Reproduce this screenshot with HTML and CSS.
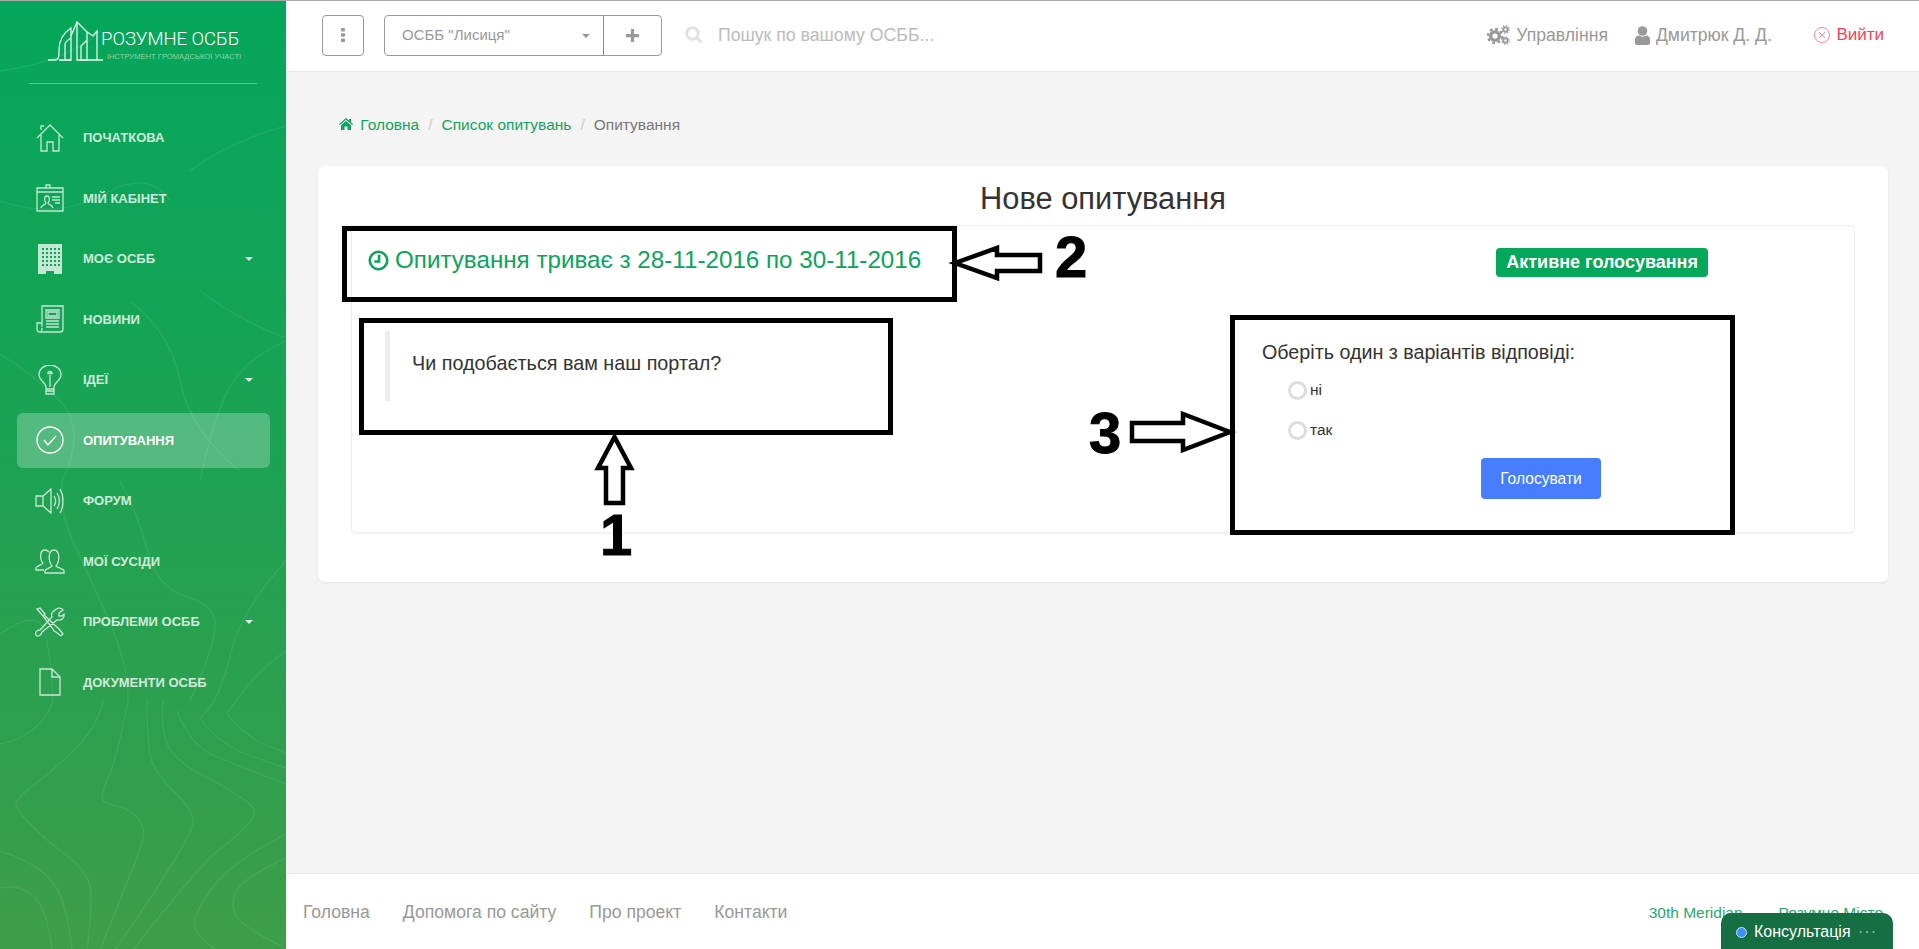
FILE: index.html
```html
<!DOCTYPE html>
<html>
<head>
  <title>Розумне ОСББ</title>
  <link rel="stylesheet" href="styles.css">
</head>
<body>

  <aside class="sidebar">
    <svg class="contours" viewBox="0 0 286 948" preserveAspectRatio="none">
      <path d="M53 700Q40 735 0 743"/>
      <path d="M103 700Q97 727 75 748Q53 770 35 783Q17 797 16 802Q15 807 29 822Q43 837 65 853Q87 870 90 885Q93 900 87 949"/>
      <path d="M128 700Q117 757 108 777Q100 797 103 800Q107 803 120 806Q133 810 140 820Q147 830 140 848Q133 867 100 949"/>
      <path d="M147 700Q147 750 153 763Q160 777 178 795Q197 813 192 826Q187 840 167 871Q147 903 115 949"/>
      <path d="M163 700Q160 733 170 748Q180 763 206 776Q233 790 246 800Q260 810 250 821Q240 833 220 848Q200 863 133 949"/>
      <path d="M177 710Q190 743 211 753Q233 763 286 783"/>
      <path d="M200 717Q217 743 251 755L286 767"/>
      <path d="M227 713Q247 737 266 744L286 752"/>
      <path d="M286 833Q233 860 213 886Q193 913 195 925Q197 937 217 949"/>
      <path d="M286 857Q243 877 236 890Q230 903 236 915Q243 927 286 947"/>
      <path d="M0 850Q33 860 50 878Q67 897 72 949"/>
      <path d="M0 887Q20 883 33 895Q47 907 52 949"/>
      <path d="M62 480Q60 513 73 541Q87 570 107 615Q128 660 128 700"/>
      <path d="M120 480Q137 510 147 548Q157 587 185 595Q213 603 215 620Q217 640 190 700"/>
      <path d="M286 560Q240 610 230 655Q220 700 200 717"/>
      <path d="M0 633Q33 610 42 625Q50 640 53 700"/>
      <path d="M286 650Q255 670 227 713"/>
      <path d="M0 353Q33 373 60 400Q87 430 62 480"/>
      <path d="M200 290Q240 320 286 337"/>
      <path d="M130 300Q170 330 180 380Q190 430 240 470"/>
      <path d="M286 340Q240 360 225 395Q210 430 200 480"/>
      <path d="M0 200Q60 220 110 190Q150 170 170 200"/>
      <path d="M190 170Q230 140 286 125"/>
      <path d="M100 30Q70 60 0 70"/>
    </svg>

    <div class="logo">
      <svg class="logo-mark" viewBox="0 0 56 42">
        <path d="M1 40H8C12 40 12 36 12 30C12 18 18 12 24 8V40H18V24C18 22 21 20 24 18"/>
        <path d="M24 16L30 2L40 12V40H34V26L40 20"/>
        <path d="M30 2V40H40"/>
        <path d="M40 12L46 16L50 11V40H56"/>
        <path d="M12 40H24M40 40H50"/>
      </svg>
      <div class="logo-text">
        <div class="logo-name">РОЗУМНЕ ОСББ</div>
        <div class="logo-sub">ІНСТРУМЕНТ ГРОМАДСЬКОЇ УЧАСТІ</div>
      </div>
    </div>

    <ul class="nav">
      <li class="nav-item">
        <svg class="nav-icon" viewBox="0 0 30 30"><path d="M2 15L15 2L28 15M6 7V3H9M6 12V28H12V19H18V28H24V12"/></svg>
        <span>Початкова</span>
      </li>
      <li class="nav-item">
        <svg class="nav-icon" viewBox="0 0 30 30"><path d="M2 5H28V28H2ZM2 9H28M11 5V2H15V5M6 25C6 22 11 22 11 20C9 18 9 13 12 13S15 18 13 20C13 22 18 22 18 25M17 14H25M17 17H25M20 20H25"/></svg>
        <span>Мій кабінет</span>
      </li>
      <li class="nav-item">
        <svg class="nav-icon" viewBox="0 0 30 30"><path class="fill" d="M3 0H27V31H19V27H11V31H3ZM7 4V6H9V4ZM11 4V6H13V4ZM15 4V6H17V4ZM19 4V6H21V4ZM23 4V6H25V4ZM7 8V10H9V8ZM11 8V10H13V8ZM15 8V10H17V8ZM19 8V10H21V8ZM23 8V10H25V8ZM7 12V14H9V12ZM11 12V14H13V12ZM15 12V14H17V12ZM19 12V14H21V12ZM23 12V14H25V12ZM7 16V18H9V16ZM11 16V18H13V16ZM15 16V18H17V16ZM19 16V18H21V16ZM23 16V18H25V16ZM7 20V22H9V20ZM11 20V22H13V20ZM15 20V22H17V20ZM19 20V22H21V20ZM23 20V22H25V20Z" fill-rule="evenodd"/></svg>
        <span>Моє ОСББ</span>
        <i class="caret"></i>
      </li>
      <li class="nav-item">
        <svg class="nav-icon" viewBox="0 0 30 30"><path d="M7 23V2H28V25C28 27 27 28 25 28H5C3 28 2 27 2 25V19H7M5 28C7 28 7 26 7 24M11 6H24V14H11ZM13 8H22V12H13ZM11 17H24M11 20H24M11 23H24"/></svg>
        <span>Новини</span>
      </li>
      <li class="nav-item">
        <svg class="nav-icon" viewBox="0 0 30 30"><path d="M11 22C11 18 4 15 4 10C4 4 9 0 15 0S26 4 26 10C26 15 19 18 19 22V29H11ZM11 24H19M11 26H19M15 22V10M13 8.500A2 2 0 1 1 17 8.500Z"/></svg>
        <span>Ідеї</span>
        <i class="caret"></i>
      </li>
      <li class="nav-item active">
        <svg class="nav-icon" viewBox="0 0 30 30"><circle cx="15" cy="15" r="13"/><path d="M9 15L13 20L21 11"/></svg>
        <span>Опитування</span>
      </li>
      <li class="nav-item">
        <svg class="nav-icon" viewBox="0 0 30 30"><path d="M1 10H8L16 3V27L8 20H1ZM8 10V20M19 10C21 13 21 17 19 20M22 7C25 12 25 18 22 23M25 3C29 10 29 20 25 27"/></svg>
        <span>Форум</span>
      </li>
      <li class="nav-item">
        <svg class="nav-icon" viewBox="0 0 30 30"><path d="M9 24H1V22C1 20 7 19 8 17C5 14 4 4 10 4C12 4 13 5 14 6M10 27V25C10 23 15 22 17 20C13 15 13 4 19 4S25 15 21 20C23 22 29 23 29 25V27Z"/></svg>
        <span>Мої сусіди</span>
      </li>
      <li class="nav-item">
        <svg class="nav-icon" viewBox="0 0 30 30"><path d="M2 2L5 1L10 7L8 9ZM9 8L24 22L28 27L26 29L21 25L19 24L18 22L8 9M20 3C23 0 27 1 28 3L24 6V9L27 9L29 7C30 11 26 14 22 13L7 25C6 29 2 30 1 28C0 26 1 23 5 23L17 10C16 8 17 5 20 3Z"/></svg>
        <span>Проблеми ОСББ</span>
        <i class="caret"></i>
      </li>
      <li class="nav-item">
        <svg class="nav-icon" viewBox="0 0 30 30"><path d="M5 2H17L25 10V28H5ZM17 2V10H25"/></svg>
        <span>Документи ОСББ</span>
      </li>
    </ul>
  </aside>

  <div class="page">
    <header class="topbar">
      <button class="menu-btn">
        <svg viewBox="0 0 4 14" width="4" height="14"><rect width="4" height="3.400" rx="1"/><rect y="5.300" width="4" height="3.400" rx="1"/><rect y="10.600" width="4" height="3.400" rx="1"/></svg>
      </button>

      <div class="osbb-select">
        <div class="osbb-name">ОСББ "Лисиця" <i class="caret-grey"></i></div>
        <div class="osbb-add">
          <svg viewBox="0 0 12 12" width="13" height="13"><path d="M4.500 0H7.500V4.500H12V7.500H7.500V12H4.500V7.500H0V4.500H4.500Z"/></svg>
        </div>
      </div>

      <svg class="search-icon" viewBox="0 0 18 18" width="18" height="18"><circle cx="7.500" cy="7.500" r="5.800"/><path d="M12 12L16.500 16.500"/></svg>
      <div class="search-text">Пошук по вашому ОСББ...</div>

      <div class="top-links">
        <span class="top-link">
          <svg class="cogs" viewBox="0 0 23 20" width="23" height="20">
            <circle cx="8" cy="11" r="4.300" stroke-width="3.400"/>
            <circle cx="8" cy="11" r="7" stroke-width="2.400" stroke-dasharray="2.750 2.750"/>
            <circle cx="18.500" cy="4.500" r="2.200" stroke-width="1.800"/>
            <circle cx="18.500" cy="4.500" r="3.600" stroke-width="1.400" stroke-dasharray="1.410 1.410"/>
            <circle cx="18.500" cy="15.500" r="2.200" stroke-width="1.800"/>
            <circle cx="18.500" cy="15.500" r="3.600" stroke-width="1.400" stroke-dasharray="1.410 1.410"/>
          </svg>
          Управління
        </span>
        <span class="top-link">
          <svg viewBox="0 0 15 19" width="15" height="19"><circle cx="7.500" cy="5" r="4.800"/><path d="M0 17V13C0 11 2 9.500 4 9.500C6 11 9 11 11 9.500C13 9.500 15 11 15 13V17C15 18 14 19 13 19H2C1 19 0 18 0 17Z"/></svg>
          Дмитрюк Д. Д.
        </span>
        <span class="top-link logout">
          <svg viewBox="0 0 16 16" width="16" height="16"><circle cx="8" cy="8" r="7.500"/><path d="M5 5L11 11M11 5L5 11"/></svg>
          Вийти
        </span>
      </div>
    </header>

    <main class="content">
      <div class="breadcrumb">
        <a>
          <svg viewBox="0 0 14 12" width="14" height="12"><path d="M7 0L10 2.600V1H12V4.300L14 6L13.200 6.900L7 1.700L.8 6.900L0 6ZM2 7.200L7 3L12 7.200V12H8.500V8.500H5.500V12H2Z"/></svg>
          Головна
        </a>
        <span class="sep">/</span>
        <a>Список опитувань</a>
        <span class="sep">/</span>
        <span class="crumb-current">Опитування</span>
      </div>

      <section class="card">
        <h2 class="card-title">Нове опитування</h2>

        <div class="poll">
          <div class="poll-head">
            <h3 class="poll-dates">
              <svg viewBox="0 0 20 20" width="21" height="21"><circle cx="10" cy="10" r="8.300"/><path d="M10.500 4.500V11H6"/></svg>
              Опитування триває з 28-11-2016 по 30-11-2016
            </h3>
            <span class="badge">Активне голосування</span>
          </div>

          <div class="poll-body">
            <blockquote class="question">Чи подобається вам наш портал?</blockquote>

            <form class="vote">
              <p class="vote-title">Оберіть один з варіантів відповіді:</p>
              <label class="option"><input type="radio" name="answer">ні</label>
              <label class="option"><input type="radio" name="answer">так</label>
              <button type="button" class="vote-btn">Голосувати</button>
            </form>
          </div>
        </div>
      </section>
    </main>

    <footer class="footer">
      <nav class="footer-nav">
        <a>Головна</a>
        <a>Допомога по сайту</a>
        <a>Про проект</a>
        <a>Контакти</a>
      </nav>
      <div class="footer-right">
        <a>30th Meridian</a>
        <a>Розумне Місто</a>
      </div>
    </footer>
  </div>

  <!-- hand drawn notes on top of the screenshot -->
  <svg class="notes" viewBox="0 0 1919 949" width="1919" height="949">
    <rect x="344.500" y="228.500" width="610" height="71"/>
    <rect x="361.500" y="320.500" width="529" height="112"/>
    <rect x="1232.500" y="317.500" width="500" height="215"/>
    <path class="arrow" d="M614.500 437L631 468H623V503H606V468H598Z"/>
    <path class="arrow" d="M955 263L997 248V255H1040V271H997V278Z"/>
    <path class="arrow" d="M1230 432L1183 414V423H1132V441H1183V450Z"/>
    <text x="600" y="555">1</text>
    <text x="1055" y="277">2</text>
    <text x="1089" y="453">3</text>
  </svg>

  <div class="consult">
    <i class="consult-dot"></i>
    <span>Консультація</span>
    <span class="consult-more">···</span>
  </div>

</body>
</html>
```

FILE: styles.css
```css
* {
  box-sizing: border-box;
}

html, body {
  margin: 0;
  height: 100%;
}

body {
  display: flex;
  height: 949px;
  overflow: hidden;
  border-top: 1px solid #aaa;
  background-color: #f4f4f4;
  color: #333;
  font-family: "Liberation Sans", Arial, sans-serif;
  font-size: 14px;
}

/* sidebar */

.sidebar {
  position: relative;
  flex: 0 0 286px;
  background: linear-gradient(#04a65b, #1ba354 45%, #2aa050 70%, #3d9e48);
  color: #fff;
}

.contours {
  position: absolute;
  top: 0;
  left: 0;
  width: 100%;
  height: 100%;
}

.contours path {
  fill: none;
  stroke: rgba(255, 255, 255, 0.08);
  stroke-width: 1.3;
}

.logo {
  position: relative;
  display: flex;
  align-items: flex-end;
  margin: 0 29px;
  padding: 0 0 21px 18px;
  border-bottom: 1px solid rgba(255, 255, 255, 0.35);
  box-sizing: content-box;
  height: 61px;
}

.logo-mark {
  flex: 0 0 56px;
  width: 56px;
  height: 42px;
  margin-right: -2px;
  fill: none;
  stroke: #fff;
  stroke-width: 1.3;
  opacity: 0.9;
}

.logo-name {
  font-family: Roboto, sans-serif;
  font-weight: 300;
  font-size: 18.500px;
  line-height: 20px;
  white-space: nowrap;
}

.logo-sub {
  margin: 3px 0 0 6px;
  color: #8ad6a8;
  font-size: 7.600px;
  line-height: 10px;
  white-space: nowrap;
}

.nav {
  position: relative;
  list-style: none;
  margin: 26px 16px 0 17px;
  padding: 0;
}

.nav-item {
  display: flex;
  align-items: center;
  height: 55px;
  margin-bottom: 5.500px;
  padding-left: 18px;
  border-radius: 6px;
  color: rgba(255, 255, 255, 0.8);
  font-size: 13px;
  font-weight: bold;
  text-transform: uppercase;
}

.nav-item.active {
  background-color: rgba(255, 255, 255, 0.25);
  color: #fff;
}

.nav-icon {
  flex: 0 0 30px;
  width: 30px;
  height: 30px;
  margin-right: 18px;
  fill: none;
  stroke: rgba(255, 255, 255, 0.75);
  stroke-width: 1.3;
}

.nav-icon .fill {
  fill: rgba(255, 255, 255, 0.75);
  stroke: none;
}

.active .nav-icon {
  stroke: #fff;
}

.caret {
  margin-left: auto;
  margin-right: 17px;
  border-top: 4px solid rgba(255, 255, 255, 0.85);
  border-left: 4px solid transparent;
  border-right: 4px solid transparent;
}

/* top bar */

.page {
  flex: 1;
  display: flex;
  flex-direction: column;
  min-width: 0;
}

.topbar {
  display: flex;
  align-items: center;
  flex: 0 0 71px;
  padding: 0 35px 2px 36px;
  background-color: #fff;
  border-bottom: 1px solid #e8e8e8;
}

.menu-btn {
  display: flex;
  align-items: center;
  justify-content: center;
  width: 42px;
  height: 41px;
  padding: 0;
  background: #fff;
  border: 1px solid #999;
  border-radius: 4px;
}

.menu-btn svg {
  fill: #999;
}

.osbb-select {
  display: flex;
  width: 278px;
  height: 41px;
  margin-left: 20px;
  border: 1px solid #999;
  border-radius: 4px;
}

.osbb-name {
  position: relative;
  flex: 1;
  padding-left: 17px;
  color: #999;
  font-size: 15px;
  line-height: 38px;
  border-right: 1px solid #888;
}

.caret-grey {
  position: absolute;
  top: 18px;
  right: 13px;
  border-top: 4px solid #999;
  border-left: 4px solid transparent;
  border-right: 4px solid transparent;
}

.osbb-add {
  display: flex;
  align-items: center;
  justify-content: center;
  width: 57px;
}

.osbb-add svg {
  fill: #999;
}

.search-icon {
  margin-left: 23px;
  fill: none;
  stroke: #e2e2e2;
  stroke-width: 3;
}

.search-text {
  margin-left: 15px;
  color: #bbb;
  font-size: 17.700px;
}

.top-links {
  display: flex;
  align-items: center;
  margin-left: auto;
}

.top-link {
  display: flex;
  align-items: center;
  gap: 6px;
  margin-left: 27px;
  color: #999;
  font-size: 17.600px;
}

.top-link svg {
  fill: #999;
}

.top-link .cogs {
  fill: none;
  stroke: #999;
}

.logout {
  margin-left: 42.500px;
  color: #ff3b55;
  font-size: 17px;
}

.logout svg {
  fill: none;
  stroke: #ff6b80;
  stroke-width: 0.8;
}

/* content */

.content {
  flex: 1;
  padding: 43px 31px 0 32px;
}

.breadcrumb {
  display: flex;
  align-items: center;
  padding-left: 21px;
  font-size: 15.500px;
  line-height: 20px;
  color: #777;
}

.breadcrumb a {
  color: #12a45f;
}

.breadcrumb svg {
  fill: #12a45f;
  margin-right: 3px;
}

.sep {
  margin: 0 9px;
  color: #ccc;
}

.card {
  margin-top: 31px;
  padding: 15px 33px 49px;
  background-color: #fff;
  border-radius: 6px;
  box-shadow: 0 1px 2px rgba(0, 0, 0, 0.08);
}

.card-title {
  margin: 0;
  height: 44px;
  text-align: center;
  font-size: 30.800px;
  font-weight: normal;
  line-height: 36px;
}

.poll {
  border: 1px solid #eee;
  border-radius: 5px;
  box-shadow: 0 1px 1px rgba(0, 0, 0, 0.04);
}

.poll-head {
  display: flex;
  align-items: flex-start;
  justify-content: space-between;
  height: 74px;
  padding: 17px 146px 0 16px;
}

.poll-dates {
  display: flex;
  align-items: center;
  gap: 6px;
  margin: 0;
  color: #0ba45c;
  font-size: 24.200px;
  font-weight: normal;
  line-height: 34px;
}

.poll-dates svg {
  fill: none;
  stroke: #0ba45c;
  stroke-width: 2.500;
}

.badge {
  margin-top: 5px;
  padding: 0 10px;
  background-color: #05a75a;
  border-radius: 4px;
  color: #fff;
  font-size: 18px;
  font-weight: bold;
  line-height: 29px;
}

.poll-body {
  display: flex;
  justify-content: space-between;
}

.question {
  width: 440px;
  height: 70px;
  margin: 31px 0 0 33px;
  padding: 20px 20px 0 22px;
  border-left: 5px solid #eee;
  font-size: 19.800px;
  line-height: 25px;
}

.vote {
  display: flex;
  flex-direction: column;
  align-items: flex-start;
  width: 440px;
  margin: 39px 152px 33px 0;
}

.vote-title {
  margin: 0 0 5px;
  font-size: 19.700px;
  line-height: 26px;
}

.option {
  display: flex;
  align-items: center;
  height: 40px;
  margin-left: 26px;
  font-size: 15.500px;
}

.option input {
  appearance: none;
  width: 19px;
  height: 19px;
  margin: 0 3px 0 0;
  border: 3px solid #ddd;
  border-radius: 50%;
}

.vote-btn {
  margin: 8px 0 0 219px;
  width: 120px;
  height: 41px;
  background-color: #477eff;
  border: none;
  border-radius: 4px;
  color: #fff;
  font-family: inherit;
  font-size: 15.600px;
}

/* footer */

.footer {
  display: flex;
  align-items: center;
  justify-content: space-between;
  flex: 0 0 76px;
  padding: 2px 36px 0 17px;
  background-color: #fff;
  border-top: 1px solid #e8e8e8;
  font-size: 17.600px;
}

.footer-nav {
  display: flex;
  gap: 33px;
  color: #999;
}

.footer-right {
  display: flex;
  gap: 36px;
  color: #2aa86f;
  font-size: 15.500px;
}

/* things lying over the page */

.notes {
  position: absolute;
  top: 0;
  left: 0;
  fill: none;
  stroke: #000;
  stroke-width: 5;
  pointer-events: none;
}

.notes .arrow {
  fill: #fff;
  stroke-width: 4.500;
}

.notes text {
  fill: #000;
  stroke: #000;
  stroke-width: 1;
  font-family: "Liberation Sans Narrow", "Liberation Sans", sans-serif;
  font-size: 58px;
  font-weight: bold;
}

.consult {
  position: absolute;
  left: 1721px;
  bottom: 0;
  display: flex;
  align-items: center;
  width: 172px;
  height: 36px;
  padding: 2px 16px 0 15px;
  background-color: #166e43;
  border-radius: 10px 10px 0 0;
  color: #fff;
  font-size: 16px;
}

.consult-dot {
  width: 11px;
  height: 11px;
  margin-right: 7px;
  background-color: #3b93f5;
  border: 1px solid #cfe3f8;
  border-radius: 50%;
}

.consult-more {
  margin-left: auto;
  color: #9cc4ad;
  letter-spacing: 1px;
}
```
